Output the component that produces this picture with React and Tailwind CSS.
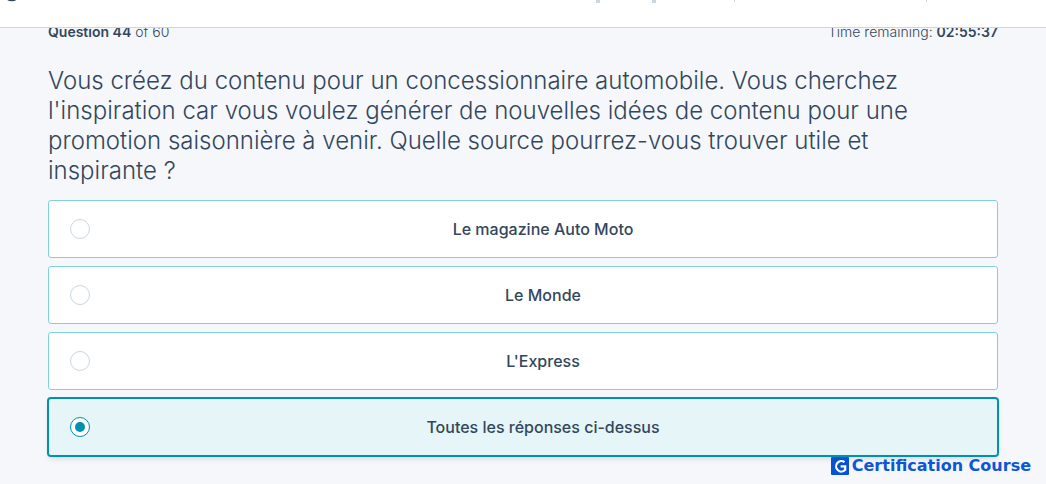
import { useState } from 'react';

const options = [
  'Le magazine Auto Moto',
  'Le Monde',
  "L'Express",
  'Toutes les réponses ci-dessus',
];

const Header = () => (
  <header className="relative z-10 flex h-7 items-start justify-between border-b border-[#cbd6e2] bg-white">
    <svg width="24" height="3" viewBox="0 0 24 3" aria-hidden="true">
      <path d="M7.500 -1C9.500 0.700 14 0.700 16 -1" fill="none" stroke="#33475b" strokeWidth="2" />
    </svg>
    <div className="flex items-start pr-[119px]">
      <span className="mr-[52px] h-[3px] w-1 bg-[#cbd6e2]" />
      <span className="mr-[78px] h-[3px] w-1 bg-[#cbd6e2]" />
      <span className="mr-[191px] h-0.5 w-px bg-[#cbd6e2]" />
      <span className="h-0.5 w-px bg-[#cbd6e2]" />
    </div>
  </header>
);

const Option = ({ label, checked, onChange }) => (
  <label
    className={`flex cursor-pointer items-center gap-5 rounded-[3px] border px-[21px] py-4 ${
      checked
        ? 'border-[#0091ae] bg-[#e5f5f8] shadow-md ring-1 ring-[#0091ae]'
        : 'border-[#7fd1de] bg-white'
    }`}
  >
    <input
      type="radio"
      name="answer"
      value={label}
      checked={checked}
      onChange={onChange}
      className="grid size-5 shrink-0 appearance-none place-items-center rounded-full border border-[#cbd6e2] bg-white before:size-2.5 before:rounded-full checked:border-[#0091ae] checked:before:bg-[#0091ae]"
    />
    <span className="flex-1 text-center text-base font-medium">{label}</span>
  </label>
);

const Brand = () => (
  <div className="mt-px flex items-center justify-end gap-[3px] pr-[15px] text-[#0b57d8]">
    <svg width="18" height="18" viewBox="0 0 18 18" aria-hidden="true">
      <rect width="18" height="18" rx="1" fill="#0553d4" />
      <path
        d="M13.500 5.200A5.200 5.200 0 1 0 14.200 12.800V9.300H9.600"
        fill="none"
        stroke="#fff"
        strokeWidth="2.200"
      />
    </svg>
    <span className="font-['DejaVu_Sans',sans-serif] text-base leading-[18px] font-bold">
      Certification Course
    </span>
  </div>
);

const App = () => {
  const [answer, setAnswer] = useState(options[3]);

  return (
    <div className="min-h-screen bg-[#f5f7fb] font-['Inter',sans-serif] text-[#33475b]">
      <Header />
      <main className="-mt-1.5 px-12">
        <div className="flex justify-between text-sm leading-5">
          <p className="font-light">
            <strong className="font-semibold">Question 44</strong> of 60
          </p>
          <p className="font-light">
            Time remaining: <strong className="font-semibold">02:55:37</strong>
          </p>
        </div>
        <form>
          <fieldset>
            <legend className="pt-6 pb-3.5 text-2xl leading-[30px] font-light">
              Vous créez du contenu pour un concessionnaire automobile. Vous cherchez
              l'inspiration car vous voulez générer de nouvelles idées de contenu pour une
              promotion saisonnière à venir. Quelle source pourrez-vous trouver utile et
              inspirante&nbsp;?
            </legend>
            <div className="flex flex-col gap-2">
              {options.map((option) => (
                <Option
                  key={option}
                  label={option}
                  checked={answer === option}
                  onChange={() => setAnswer(option)}
                />
              ))}
            </div>
          </fieldset>
        </form>
      </main>
      <Brand />
    </div>
  );
};

export default App;
